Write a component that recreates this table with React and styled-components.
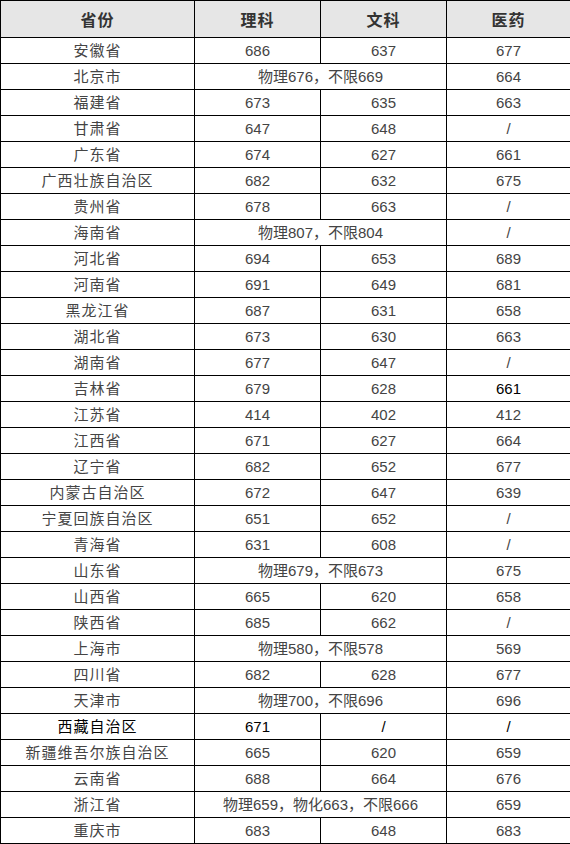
import React from "react";
import styled, { createGlobalStyle } from "styled-components";

const GlobalStyle = createGlobalStyle`
  html, body {
    margin: 0;
    padding: 0;
    background: #fff;
  }
`;

const rows = [
  ["安徽省", "686", "637", "677"],
  ["北京市", "物理676，不限669", null, "664"],
  ["福建省", "673", "635", "663"],
  ["甘肃省", "647", "648", "/"],
  ["广东省", "674", "627", "661"],
  ["广西壮族自治区", "682", "632", "675"],
  ["贵州省", "678", "663", "/"],
  ["海南省", "物理807，不限804", null, "/"],
  ["河北省", "694", "653", "689"],
  ["河南省", "691", "649", "681"],
  ["黑龙江省", "687", "631", "658"],
  ["湖北省", "673", "630", "663"],
  ["湖南省", "677", "647", "/"],
  ["吉林省", "679", "628", "661", [3]],
  ["江苏省", "414", "402", "412"],
  ["江西省", "671", "627", "664"],
  ["辽宁省", "682", "652", "677"],
  ["内蒙古自治区", "672", "647", "639"],
  ["宁夏回族自治区", "651", "652", "/"],
  ["青海省", "631", "608", "/"],
  ["山东省", "物理679，不限673", null, "675"],
  ["山西省", "665", "620", "658"],
  ["陕西省", "685", "662", "/"],
  ["上海市", "物理580，不限578", null, "569"],
  ["四川省", "682", "628", "677"],
  ["天津市", "物理700，不限696", null, "696"],
  ["西藏自治区", "671", "/", "/", [0, 1, 2, 3]],
  ["新疆维吾尔族自治区", "665", "620", "659"],
  ["云南省", "688", "664", "676"],
  ["浙江省", "物理659，物化663，不限666", null, "659"],
  ["重庆市", "683", "648", "683"],
];

const Table = styled.table`
  width: 570px;
  table-layout: fixed;
  border-collapse: collapse;
  font-family: "Liberation Sans", "Noto Sans CJK SC", sans-serif;
`;

const Th = styled.th`
  height: 36px;
  padding: 0;
  border: 1px solid #000;
  background: #e6e6e6;
  color: #333;
  font-size: 16px;
  font-weight: bold;
  letter-spacing: 1px;
  text-align: center;
  vertical-align: middle;
`;

const Td = styled.td`
  height: 25px;
  padding: 0;
  border: 1px solid #000;
  color: ${(p) => (p.$dark ? "#000" : "#444")};
  font-size: 15px;
  line-height: 25px;
  text-align: center;
  vertical-align: middle;
  white-space: nowrap;
  letter-spacing: ${(p) => (p.$wide ? "1px" : "0")};
`;

export default function App() {
  return (
    <>
      <GlobalStyle />
      <Table>
        <colgroup>
          <col style={{ width: 194 }} />
          <col style={{ width: 126 }} />
          <col style={{ width: 126 }} />
          <col style={{ width: 124 }} />
        </colgroup>
        <thead>
          <tr>
            <Th>省份</Th>
            <Th>理科</Th>
            <Th>文科</Th>
            <Th>医药</Th>
          </tr>
        </thead>
        <tbody>
          {rows.map(([name, a, b, c, dark = []]) => (
            <tr key={name}>
              <Td $wide $dark={dark.includes(0)}>{name}</Td>
              {b === null ? (
                <Td colSpan={2}>{a}</Td>
              ) : (
                <>
                  <Td $dark={dark.includes(1)}>{a}</Td>
                  <Td $dark={dark.includes(2)}>{b}</Td>
                </>
              )}
              <Td $dark={dark.includes(3)}>{c}</Td>
            </tr>
          ))}
        </tbody>
      </Table>
    </>
  );
}
